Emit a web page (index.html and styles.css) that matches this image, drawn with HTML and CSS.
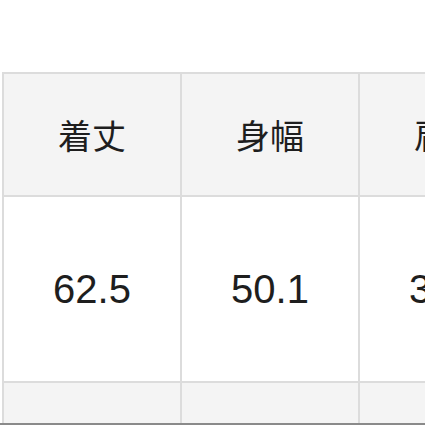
FILE: index.html
```html
<!DOCTYPE html>
<html lang="ja">
<head>
<meta charset="utf-8">
<link rel="stylesheet" href="styles.css">
</head>
<body>
<div class="frame">
  <table class="sizes">
    <tr class="head">
      <th>着丈</th>
      <th>身幅</th>
      <th>肩幅</th>
    </tr>
    <tr class="data">
      <td>62.5</td>
      <td>50.1</td>
      <td>39.5</td>
    </tr>
    <tr class="head">
      <th>&nbsp;</th>
      <th>&nbsp;</th>
      <th>&nbsp;</th>
    </tr>
  </table>
</div>
<div class="edge"></div>
</body>
</html>
```

FILE: styles.css
```css
html, body {
  margin: 0;
  padding: 0;
  background: #ffffff;
  overflow: hidden;
}
.frame {
  width: 425px;
  height: 425px;
  overflow: hidden;
  padding-top: 72px;
  padding-left: 2px;
  box-sizing: border-box;
}
.sizes {
  border-collapse: collapse;
  table-layout: fixed;
  width: 536px;
}
.sizes th,
.sizes td {
  width: 176px;
  border: 2px solid #dcdcdc;
  text-align: center;
  vertical-align: middle;
  padding: 0;
  color: #1e1e1e;
}
.sizes th {
  background: #f4f4f4;
  font-family: "Noto Sans CJK JP", "Noto Sans CJK SC", sans-serif;
  font-weight: 400;
  font-size: 34px;
  line-height: 1;
}
.sizes td {
  background: #ffffff;
  font-family: "Liberation Sans", Arial, sans-serif;
  font-size: 40px;
  line-height: 1;
}
.head {
  height: 123px;
}
.data {
  height: 186px;
}
.edge {
  position: fixed;
  left: 0;
  right: 0;
  bottom: 0;
  height: 2px;
  background: #8a8a8a;
}
```
